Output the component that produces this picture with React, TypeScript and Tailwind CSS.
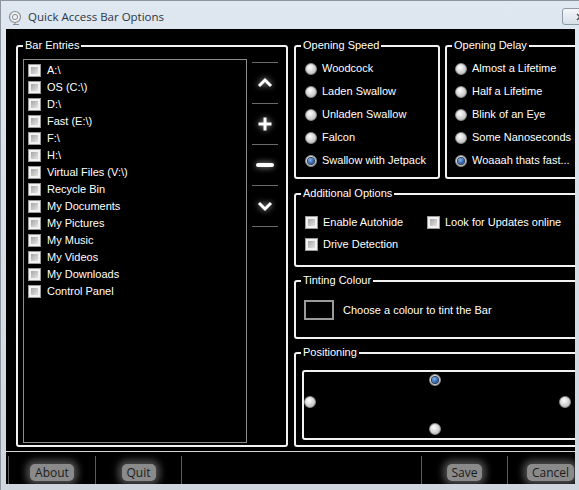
import React from "react";

const ENTRIES = [
  "A:\\",
  "OS (C:\\)",
  "D:\\",
  "Fast (E:\\)",
  "F:\\",
  "H:\\",
  "Virtual Files (V:\\)",
  "Recycle Bin",
  "My Documents",
  "My Pictures",
  "My Music",
  "My Videos",
  "My Downloads",
  "Control Panel",
];

const SPEEDS = ["Woodcock", "Laden Swallow", "Unladen Swallow", "Falcon", "Swallow with Jetpack"];
const DELAYS = ["Almost a Lifetime", "Half a Lifetime", "Blink of an Eye", "Some Nanoseconds", "Woaaah thats fast..."];

const ui = { fontFamily: '"Liberation Sans", Arial, sans-serif' };
const chrome = { fontFamily: '"Open Sans", "Noto Sans", sans-serif' };

function Check() {
  return (
    <span className="w-[13px] h-[13px] shrink-0 border border-[#9c9c9c] bg-[#f2f2f2] p-[2px] flex">
      <span className="flex-1 bg-gradient-to-br from-[#a6a6a6] to-[#e4e4e4]" />
    </span>
  );
}

function Radio({ on = false }: { on?: boolean }) {
  return (
    <span className="w-[12px] h-[12px] shrink-0 rounded-full border border-[#8c8c8c] bg-[radial-gradient(circle_at_40%_35%,#ffffff,#c4c4c4_70%,#a8a8a8)] flex items-center justify-center">
      {on && <span className="w-[6px] h-[6px] rounded-full bg-[radial-gradient(circle_at_40%_35%,#7fb8ff,#1d4f9a_70%,#0d2a55)] ring-1 ring-[#2a3d58]" />}
    </span>
  );
}

function Group({ title, className, children }: { title: string; className?: string; children?: React.ReactNode }) {
  return (
    <fieldset className={`border-2 border-[#f2f2f2] rounded-[3px] ${className ?? ""}`}>
      <legend className="ml-[5px] px-[2px] text-[11px] leading-[13px] text-white">{title}</legend>
      {children}
    </fieldset>
  );
}

// glowing side-bar glyphs (up / add / remove / down)
function SideIcon({ kind }: { kind: "up" | "plus" | "minus" | "down" }) {
  return (
    <svg width="20" height="18" viewBox="0 0 20 18" className="drop-shadow-[0_0_3px_#b4b4b4]">
      {kind === "up" && <path d="M4 12 L10 6 L16 12" fill="none" stroke="white" strokeWidth="3" />}
      {kind === "down" && <path d="M4 6 L10 12 L16 6" fill="none" stroke="white" strokeWidth="3" />}
      {kind === "plus" && <path d="M3.5 9 H16.5 M10 2.5 V15.5" fill="none" stroke="white" strokeWidth="3" />}
      {kind === "minus" && <path d="M3 9 H17" fill="none" stroke="white" strokeWidth="4" strokeLinecap="round" />}
    </svg>
  );
}

function GlowButton({ label }: { label: string }) {
  return (
    <span
      className="mt-[4px] px-[5px] leading-[17px] text-[12px] text-[#1c1c1c] bg-[#8a8a8a] rounded-[5px] shadow-[0_0_7px_4px_#4d4d4d]"
      style={chrome}
    >
      {label}
    </span>
  );
}

export default function App() {
  return (
    <div className="w-[579px] h-[490px] overflow-hidden border-t border-l border-[#8e959c] bg-gradient-to-b from-[#dfe7f0] to-[#cfd6de] flex flex-col" style={ui}>
      {/* title bar */}
      <div className="h-[28px] shrink-0 flex items-center pl-[7px] pt-[4px] relative">
        <svg width="14" height="15" viewBox="0 0 14 15" className="mr-[6px]">
          <circle cx="7" cy="7" r="5.5" fill="#eef1f4" stroke="#8a8f96" strokeWidth="1.2" />
          <circle cx="7" cy="7" r="2.6" fill="none" stroke="#8a8f96" strokeWidth="1" />
          <path d="M7 12.5 L7 14.5 M5 14.5 H11" stroke="#8a8f96" strokeWidth="1" />
        </svg>
        <span className="text-[11.5px] text-[#2a3646]" style={chrome}>Quick Access Bar Options</span>
        {/* close button, partly off the edge */}
        <span className="absolute right-[-7px] top-[7px] w-[24px] h-[17px] rounded-[3px] border border-[#8f9aa7] bg-gradient-to-b from-[#f3f6f9] to-[#d8e0e8] flex items-center pl-[13px]">
          <svg width="8" height="8" viewBox="0 0 8 8">
            <path d="M1 1 L7 7 M7 1 L1 7" stroke="#4a4f56" strokeWidth="1.4" />
          </svg>
        </span>
      </div>

      {/* client area */}
      <div className="ml-[5px] mr-[4px] h-[455px] bg-black overflow-hidden flex flex-col">
        <div className="w-[600px] h-[422px] shrink-0 flex gap-[6px] pl-[10px] pt-[10px]">
          {/* bar entries */}
          <Group title="Bar Entries" className="w-[272px] h-[408px] shrink-0 flex">
            <div className="flex h-full pl-[5px] pt-[7px] pb-[1px]">
              <div className="w-[224px] h-[384px] border border-[#8d8d8d] pt-[2px] pl-[4px]">
                {ENTRIES.map((e) => (
                  <div key={e} className="h-[17px] flex items-center gap-[6px] text-[11px] text-white">
                    <Check />
                    <span>{e}</span>
                  </div>
                ))}
              </div>
              <div className="w-[26px] ml-[5px] flex flex-col pt-[3px]">
                {(["up", "plus", "minus", "down"] as const).map((k) => (
                  <div key={k} className="h-[41px] border-t border-[#6a6a6a] flex items-center justify-center">
                    <SideIcon kind={k} />
                  </div>
                ))}
                <div className="border-t border-[#6a6a6a]" />
              </div>
            </div>
          </Group>

          {/* right column */}
          <div className="w-[300px] flex flex-col">
            <div className="flex gap-[5px]">
              <Group title="Opening Speed" className="w-[146px] h-[140px] shrink-0">
                <div className="flex flex-col pl-[9px] pt-[5px]">
                  {SPEEDS.map((s, i) => (
                    <div key={s} className="h-[23px] flex items-center gap-[5px] text-[11px] text-white">
                      <Radio on={i === 4} />
                      <span>{s}</span>
                    </div>
                  ))}
                </div>
              </Group>
              <Group title="Opening Delay" className="w-[150px] h-[140px] shrink-0">
                <div className="flex flex-col pl-[8px] pt-[5px]">
                  {DELAYS.map((s, i) => (
                    <div key={s} className="h-[23px] flex items-center gap-[5px] text-[11px] text-white whitespace-nowrap">
                      <Radio on={i === 4} />
                      <span>{s}</span>
                    </div>
                  ))}
                </div>
              </Group>
            </div>

            <Group title="Additional Options" className="mt-[8px] h-[80px]">
              <div className="grid grid-cols-[122px_1fr] pl-[9px] pt-[11px] text-[11px] text-white">
                <div className="h-[22px] flex items-center gap-[5px]"><Check /><span>Enable Autohide</span></div>
                <div className="h-[22px] flex items-center gap-[5px]"><Check /><span>Look for Updates online</span></div>
                <div className="h-[22px] flex items-center gap-[5px]"><Check /><span>Drive Detection</span></div>
              </div>
            </Group>

            <Group title="Tinting Colour" className="mt-[7px] h-[65px]">
              <div className="flex items-center gap-[9px] pl-[8px] pt-[13px] text-[11px] text-white">
                <span className="w-[30px] h-[20px] border-2 border-[#9a9a9a] bg-black" />
                <span>Choose a colour to tint the Bar</span>
              </div>
            </Group>

            <Group title="Positioning" className="mt-[7px] h-[101px]">
              <div className="pl-[6px] pt-[11px]">
                {/* docking spots around the screen edge */}
                <div className="relative w-[290px] h-[70px] border-2 border-[#f2f2f2] rounded-[3px]">
                  <span className="absolute left-[125px] top-[2px]"><Radio on /></span>
                  <span className="absolute left-[0px] top-[24px]"><Radio /></span>
                  <span className="absolute left-[255px] top-[24px]"><Radio /></span>
                  <span className="absolute left-[125px] top-[51px]"><Radio /></span>
                </div>
              </div>
            </Group>
          </div>
        </div>

        {/* footer buttons */}
        <div className="flex-1 border-t border-[#d6d6d6] flex pl-[2px] pt-[4px]">
          <div className="w-[87px] shrink-0 border-l border-[#5c5c5c] flex items-center justify-center"><GlowButton label="About" /></div>
          <div className="w-[86px] shrink-0 border-l border-[#5c5c5c] flex items-center justify-center"><GlowButton label="Quit" /></div>
          <div className="w-[240px] shrink-0 border-l border-[#5c5c5c]" />
          <div className="w-[86px] shrink-0 border-l border-[#5c5c5c] flex items-center justify-center"><GlowButton label="Save" /></div>
          <div className="w-[86px] shrink-0 border-l border-[#5c5c5c] flex items-center justify-center"><GlowButton label="Cancel" /></div>
        </div>
      </div>
    </div>
  );
}
